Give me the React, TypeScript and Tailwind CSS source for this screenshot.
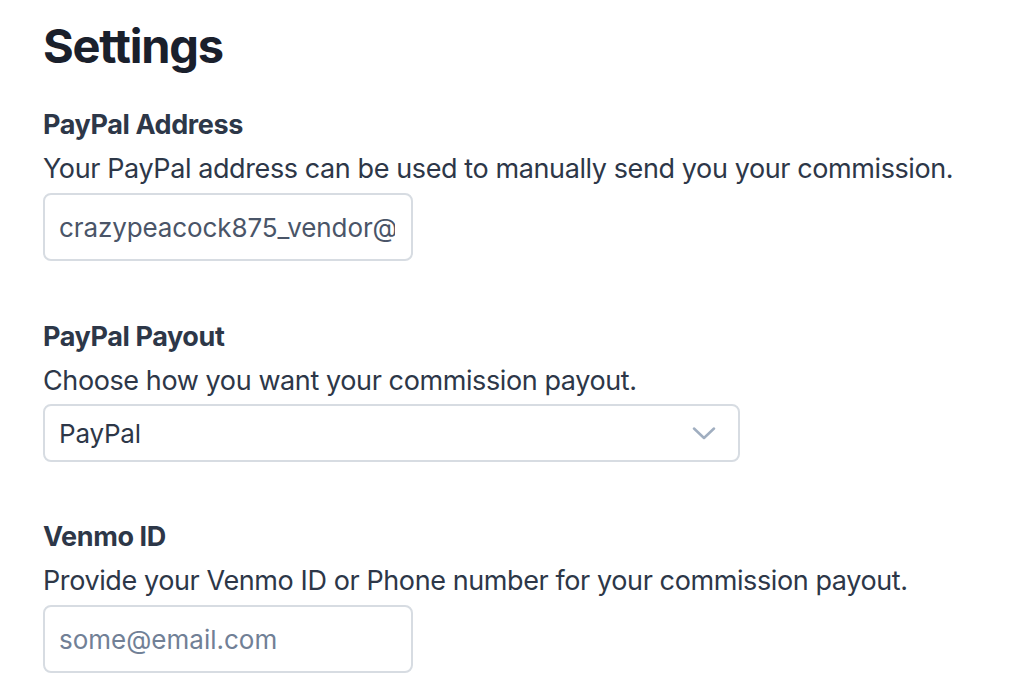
import React from "react";

export default function App() {
  const font = { fontFamily: "Inter, 'Noto Sans', sans-serif" };
  return (
    <div className="min-h-[692px] bg-white pl-[43px] pt-[18px]" style={font}>
      <h1 className="text-[47px] leading-[56px] font-bold text-[#1a202c] tracking-[-1.2px]">Settings</h1>

      <div className="mt-[33px]">
        <div className="text-[27px] leading-[36px] font-bold text-[#2d3748] tracking-[-0.4px]">PayPal Address</div>
        <div className="mt-[8px] text-[27px] leading-[36px] text-[#2d3748] tracking-[-0.4px]">
          Your PayPal address can be used to manually send you your commission.
        </div>
        <input
          readOnly
          value="crazypeacock875_vendor@example.com"
          className="mt-[6px] block w-[370px] h-[68px] rounded-[8px] border-2 border-[#d7dce2] pl-[14px] pr-[16px] text-[26px] text-[#4a5568] outline-none bg-white tracking-[-0.1px]"
          style={font}
        />
      </div>

      <div className="mt-[58px]">
        <div className="text-[27px] leading-[36px] font-bold text-[#2d3748] tracking-[-0.4px]">PayPal Payout</div>
        <div className="mt-[8px] text-[27px] leading-[36px] text-[#2d3748] tracking-[-0.4px]">
          Choose how you want your commission payout.
        </div>
        <div className="mt-[5px] flex items-center justify-between w-[697px] h-[58px] rounded-[8px] border-2 border-[#d7dce2] pl-[14px] pr-[22px] bg-white">
          <span className="text-[26px] text-[#2d3748] tracking-[-0.2px]">PayPal</span>
          <svg width="24" height="13" viewBox="0 0 24 13" fill="none">
            <path d="M2 1.5 L12 11 L22 1.5" stroke="#a0aec0" strokeWidth="2.5" strokeLinecap="round" strokeLinejoin="round" />
          </svg>
        </div>
      </div>

      <div className="mt-[57px]">
        <div className="text-[27px] leading-[36px] font-bold text-[#2d3748] tracking-[-0.4px]">Venmo ID</div>
        <div className="mt-[8px] text-[27px] leading-[36px] text-[#2d3748] tracking-[-0.4px]">
          Provide your Venmo ID or Phone number for your commission payout.
        </div>
        <input
          placeholder="some@email.com"
          className="mt-[6px] block w-[370px] h-[68px] rounded-[8px] border-2 border-[#d7dce2] pl-[14px] pr-[14px] text-[26px] text-[#4a5568] placeholder:text-[#718096] outline-none bg-white"
          style={font}
        />
      </div>
    </div>
  );
}
